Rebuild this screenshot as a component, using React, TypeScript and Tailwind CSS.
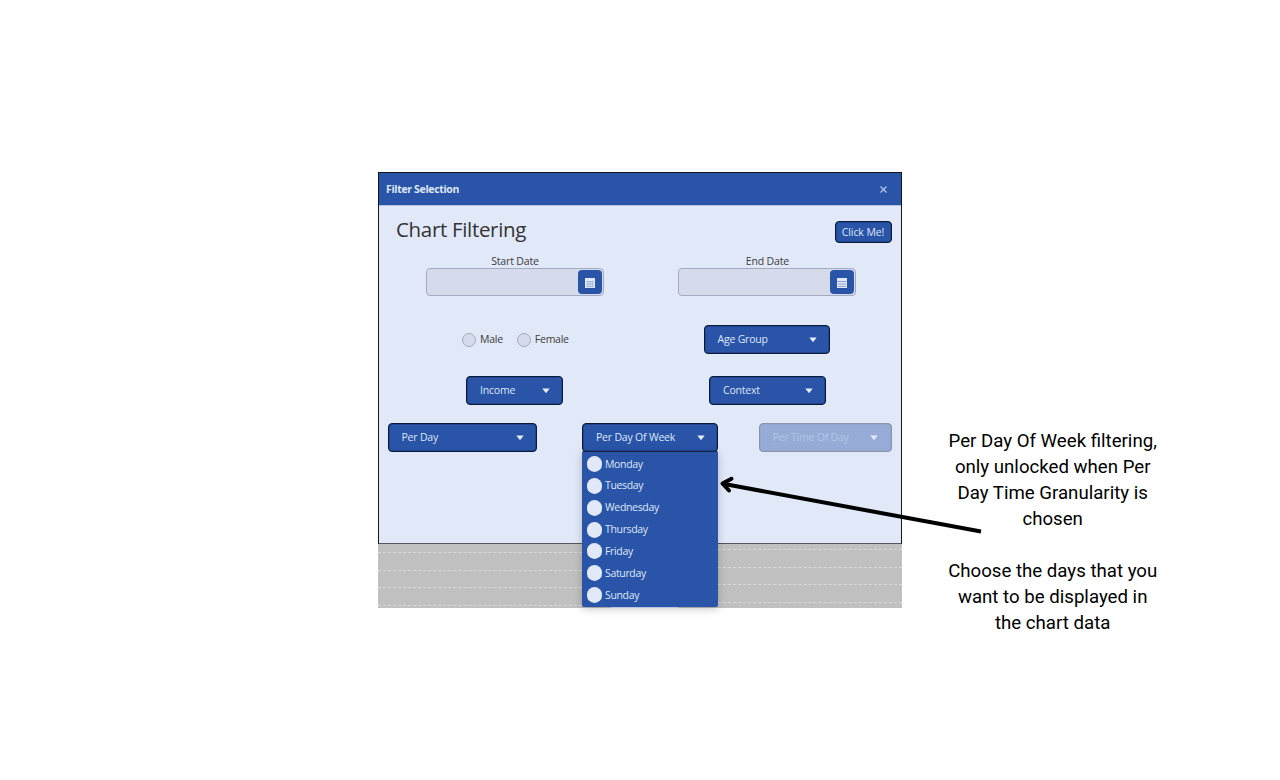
import type { ReactNode } from "react";

function Caret() {
  return (
    <svg width="8" height="5" viewBox="0 0 8 5" className="shrink-0">
      <path d="M0.3 0.4H7.7L4.6 4.6Q4 5.2 3.4 4.6Z" fill="#e6edfb" />
    </svg>
  );
}

function Select({ label, className, disabled = false }: { label: string; className: string; disabled?: boolean }) {
  return (
    <button
      className={`flex h-[29px] shrink-0 items-center justify-between rounded-[4px] border border-[#0b1a3a] bg-[#2954a8] pl-[13px] pr-[12.5px] text-[10.5px] tracking-[-0.2px] text-[#dfe7f8] shadow-[inset_0_0_0_0.5px_#0b1a3a80] ${disabled ? "opacity-40" : ""} ${className}`}
    >
      <span className={`whitespace-nowrap ${disabled ? "opacity-40" : ""}`}>{label}</span>
      <Caret />
    </button>
  );
}

function DateField({ label, solid = false }: { label: string; solid?: boolean }) {
  return (
    <div className="flex w-[178px] flex-col">
      <span className="h-[14px] text-center text-[10.5px] leading-[14px] tracking-[-0.15px] text-[#3c3c3c]">{label}</span>
      <div className="flex h-[28px] items-center justify-end rounded-[4px] border border-[#a3abc2] bg-[#d5dbea] pr-px">
        <button className="flex h-[24px] w-[24px] items-center justify-center rounded-[4px] bg-[#2954a8] pt-[2px]">
          <svg width="10" height="10" viewBox="0 0 10 10">
            <path d="M0 0H10V10H0Z" fill="#e1e8f8" />
            {solid ? (
              <path d="M0 3.5H10M1 6H9M1 8.4H9" stroke="#7690c8" strokeWidth="0.8" />
            ) : (
              <path d="M1 3.6H9M1 6H9M1 8.4H9M3 3V9.5M5.2 3V9.5M7.4 3V9.5" stroke="#8ea4d3" strokeWidth="0.6" />
            )}
          </svg>
        </button>
      </div>
    </div>
  );
}

function Radio({ label }: { label: string }) {
  return (
    <span className="flex items-center gap-[4px] text-[10.5px] tracking-[-0.25px] text-[#3c3c3c]">
      <span className="h-[14px] w-[14px] rounded-full border border-[#a3abc2] bg-[#d5dbea]" />
      <span>{label}</span>
    </span>
  );
}

function Row({ className, children }: { className: string; children: ReactNode }) {
  return <div className={`flex shrink-0 ${className}`}>{children}</div>;
}

const days = ["Monday", "Tuesday", "Wednesday", "Thursday", "Friday", "Saturday", "Sunday"];

function ChartLines({ className }: { className: string }) {
  return (
    <div className={`flex flex-col gap-[16.7px] ${className}`}>
      {[0, 1, 2, 3].map((n) => (
        <div key={n} className="h-px shrink-0 border-t border-dashed border-[#d9d9d9]" />
      ))}
    </div>
  );
}

export default function App() {
  return (
    <div className="relative flex h-[780px] w-[1280px] items-start overflow-hidden bg-white font-['Open_Sans','Noto_Sans',sans-serif]">
      <div className="ml-[378px] mt-[172px] flex h-[436px] w-[524px] shrink-0 flex-col bg-[#c0c0c0]">
        <div className="flex h-[372px] shrink-0 flex-col border border-[#14161c] border-b-[#55555f] bg-[#e1e8f8]">
          <div className="flex h-[33px] shrink-0 items-center justify-between border-b border-[#b3c1e2] bg-[#2954a8] pl-[7px] pr-[14px]">
            <span className="pt-[2px] text-[10.5px] font-bold tracking-[-0.33px] text-[#dfe7f8]">Filter Selection</span>
            <svg width="7" height="7" viewBox="0 0 7 7">
              <path d="M0.5 0.5L6.5 6.5M6.5 0.5L0.5 6.5" stroke="#bccaeb" strokeWidth="1.1" />
            </svg>
          </div>
          <Row className="h-[48px] items-start justify-between pl-[17px] pr-[9.5px]">
            <h1 className="mt-[8px] text-[20.5px] leading-[30px] tracking-[-0.32px] text-[#333333]">Chart Filtering</h1>
            <button className="mt-[15px] h-[22px] w-[57px] whitespace-nowrap rounded-[4px] border border-[#0b1a3a] bg-[#2954a8] text-[10.5px] leading-[20px] tracking-[-0.1px] text-[#dfe7f8] shadow-[inset_0_0_0_0.5px_#0b1a3a80]">
              Click Me!
            </button>
          </Row>
          <Row className="h-[71px] items-start justify-between pl-[47px] pr-[44.6px]">
            <DateField label="Start Date" />
            <DateField label="End Date" solid />
          </Row>
          <Row className="h-[51px] items-start pl-[83px]">
            <div className="flex h-[29px] w-[241.5px] items-center gap-[14px] pt-px">
              <Radio label="Male" />
              <Radio label="Female" />
            </div>
            <Select label="Age Group" className="w-[126.5px]" />
          </Row>
          <Row className="h-[47px] items-start pl-[87px]">
            <Select label="Income" className="mr-[146px] w-[97px]" />
            <Select label="Context" className="w-[117px]" />
          </Row>
          <Row className="h-[29px] items-start pl-[8.5px]">
            <Select label="Per Day" className="mr-[45px] w-[149.5px]" />
            <div className="relative mr-[40.5px] w-[136px] shrink-0">
              <Select label="Per Day Of Week" className="w-full" />
              <div className="absolute left-0 top-[28px] z-10 flex h-[156px] w-full flex-col rounded-[2px] border-t border-[#0f2247] bg-[#2954a8] shadow-[0_2px_8px_rgba(0,0,0,0.22)]">
                {days.map((day) => (
                  <div
                    key={day}
                    className="flex h-[21.88px] shrink-0 items-center gap-[3px] pl-[5px] pt-[2px] text-[10.5px] tracking-[-0.34px] text-[#dfe7f8]"
                  >
                    <span className="h-[16px] w-[15px] rounded-[50%/46%] bg-[#e1e8f8]" />
                    <span className="pt-px">{day}</span>
                  </div>
                ))}
                <div className="ml-[29px] mt-[1.6px] h-px w-[67px] shrink-0 bg-[#b9c5e0]" />
              </div>
            </div>
            <Select label="Per Time Of Day" className="w-[133px]" disabled />
          </Row>
        </div>
        <div className="flex h-[64px] justify-between overflow-hidden">
          <ChartLines className="w-[204px] pt-[8px]" />
          <ChartLines className="w-[184px] pt-[5px]" />
        </div>
      </div>
      <div className="ml-[35.7px] mt-[428px] w-[230px] shrink-0 text-center font-['Roboto',sans-serif] text-[18.65px] leading-[26px] text-black">
        <p>
          Per Day Of Week filtering,
          <br />
          only unlocked when Per
          <br />
          Day Time Granularity is
          <br />
          chosen
        </p>
        <p className="mt-[26px]">
          Choose the days that you
          <br />
          want to be displayed in
          <br />
          the chart data
        </p>
      </div>
      <svg className="absolute left-[710px] top-[470px] z-20" width="280" height="70" viewBox="710 470 280 70" fill="none" stroke="#000">
        <path d="M981 531.5L723 483.8" strokeWidth="4" />
        <path d="M731.5 478.8L722.5 483.5L729 490.5" strokeWidth="4" strokeLinecap="round" strokeLinejoin="round" />
      </svg>
    </div>
  );
}
